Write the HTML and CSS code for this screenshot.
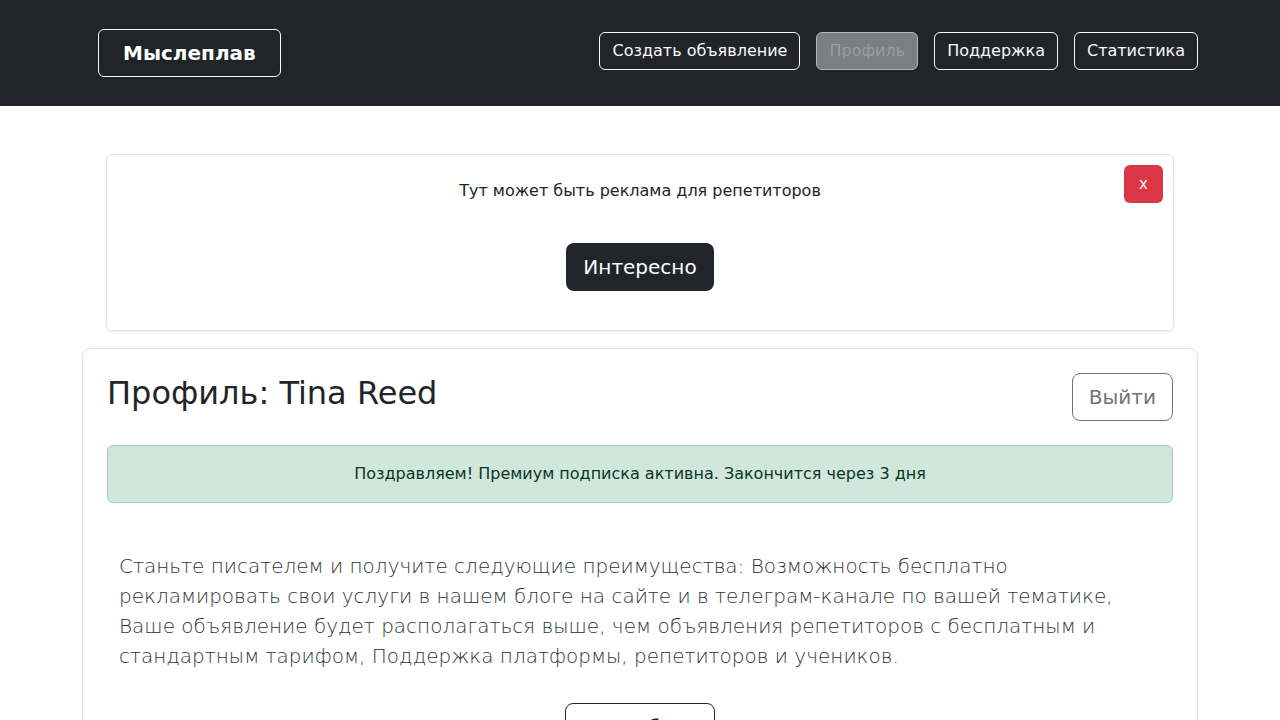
FILE: index.html
```html
<!DOCTYPE html>
<html lang="ru">
<head>
<meta charset="utf-8">
<title>Мыслеплав</title>
<link rel="stylesheet" href="styles.css">
</head>
<body>
<header class="navbar">
  <div class="nav-inner">
    <a class="brand" href="#">Мыслеплав</a>
    <nav class="nav-links">
      <a class="nav-btn" href="#">Создать объявление</a>
      <a class="nav-btn disabled" href="#">Профиль</a>
      <a class="nav-btn" href="#">Поддержка</a>
      <a class="nav-btn" href="#">Статистика</a>
    </nav>
  </div>
</header>
<main class="container">
  <section class="ad-card">
    <button class="close-btn" type="button">x</button>
    <p class="ad-text">Тут может быть реклама для репетиторов</p>
    <button class="btn-dark-lg" type="button">Интересно</button>
  </section>
  <section class="profile-card">
    <div class="profile-head">
      <h2 class="profile-title">Профиль: Tina Reed</h2>
      <button class="btn-outline-secondary-lg" type="button">Выйти</button>
    </div>
    <div class="alert-success">Поздравляем! Премиум подписка активна. Закончится через 3 дня</div>
    <p class="lead">Станьте писателем и получите следующие преимущества: Возможность бесплатно рекламировать свои услуги в нашем блоге на сайте и в телеграм-канале по вашей тематике, Ваше объявление будет располагаться выше, чем объявления репетиторов с бесплатным и стандартным тарифом, Поддержка платформы, репетиторов и учеников.</p>
    <div class="center">
      <button class="btn-outline-dark-lg" type="button">Подробнее</button>
    </div>
  </section>
</main>
</body>
</html>
```
FILE: styles.css
```css
* { box-sizing: border-box; }
html, body { margin: 0; padding: 0; }
body {
  font-family: "DejaVu Sans", sans-serif;
  font-size: 16px;
  line-height: 1.5;
  color: #212529;
  background: #fff;
}
.navbar {
  background: #212529;
  padding: 29px 0;
}
.nav-inner {
  width: 1116px;
  margin: 0 auto;
  display: flex;
  align-items: center;
  justify-content: space-between;
  padding-left: 16px;
}
.brand {
  display: inline-block;
  color: #fff;
  text-decoration: none;
  font-weight: bold;
  font-size: 20px;
  line-height: 30px;
  padding: 8px 24px;
  border: 1px solid #f8f9fa;
  border-radius: 6px;
}
.nav-links {
  display: flex;
  gap: 16px;
  align-items: center;
  margin-bottom: 4px;
}
.nav-btn {
  display: inline-block;
  color: #f8f9fa;
  text-decoration: none;
  font-size: 16px;
  line-height: 24px;
  padding: 6px 12px;
  border: 1px solid #f8f9fa;
  border-radius: 6px;
}
.nav-btn.disabled {
  background: #7c7f82;
  border-color: #b3b5b8;
  color: #9b9da0;
}
.container {
  width: 1116px;
  margin: 0 auto;
  padding-top: 48px;
}
.ad-card {
  position: relative;
  margin: 0 24px;
  border: 1px solid #e3e5e8;
  border-radius: 6px;
  box-shadow: 0 2px 4px rgba(0,0,0,0.06);
  padding: 24px 16px 39px;
  text-align: center;
}
.ad-text {
  margin: 0 0 40px;
}
.close-btn {
  position: absolute;
  top: 10px;
  right: 10px;
  width: 39px;
  height: 38px;
  border: none;
  border-radius: 6px;
  background: #dc3545;
  color: #fff;
  font-family: "DejaVu Sans", sans-serif;
  font-size: 15px;
  line-height: 24px;
  padding: 0;
}
.btn-dark-lg {
  font-family: "DejaVu Sans", sans-serif;
  font-size: 20px;
  line-height: 30px;
  padding: 9px 17px;
  background: #212529;
  color: #fff;
  border: none;
  border-radius: 8px;
}
.profile-card {
  margin-top: 17px;
  border: 1px solid #dee2e6;
  border-radius: 8px;
  padding: 24px 24px 40px;
}
.profile-head {
  display: flex;
  justify-content: space-between;
  align-items: flex-start;
}
.profile-title {
  margin: 1px 0 0;
  font-size: 32px;
  font-weight: normal;
  line-height: 38px;
}
.btn-outline-secondary-lg {
  font-family: "DejaVu Sans", sans-serif;
  font-size: 20px;
  line-height: 30px;
  padding: 8px 16px;
  background: #fff;
  color: #6c757d;
  border: 1px solid #6c757d;
  border-radius: 8px;
}
.alert-success {
  margin-top: 24px;
  background: #d1e7dd;
  border: 1px solid #a3cfbb;
  border-radius: 6px;
  color: #0a3622;
  padding: 16px;
  text-align: center;
}
.lead {
  margin: 48px 12px 32px;
  font-size: 20px;
  font-weight: 300;
  line-height: 30px;
  color: #2f3337;
}
.center { text-align: center; }
.btn-outline-dark-lg {
  font-family: "DejaVu Sans", sans-serif;
  font-size: 20px;
  line-height: 30px;
  padding: 8px 16px;
  background: #fff;
  color: #212529;
  border: 1px solid #212529;
  border-radius: 8px;
}
```
